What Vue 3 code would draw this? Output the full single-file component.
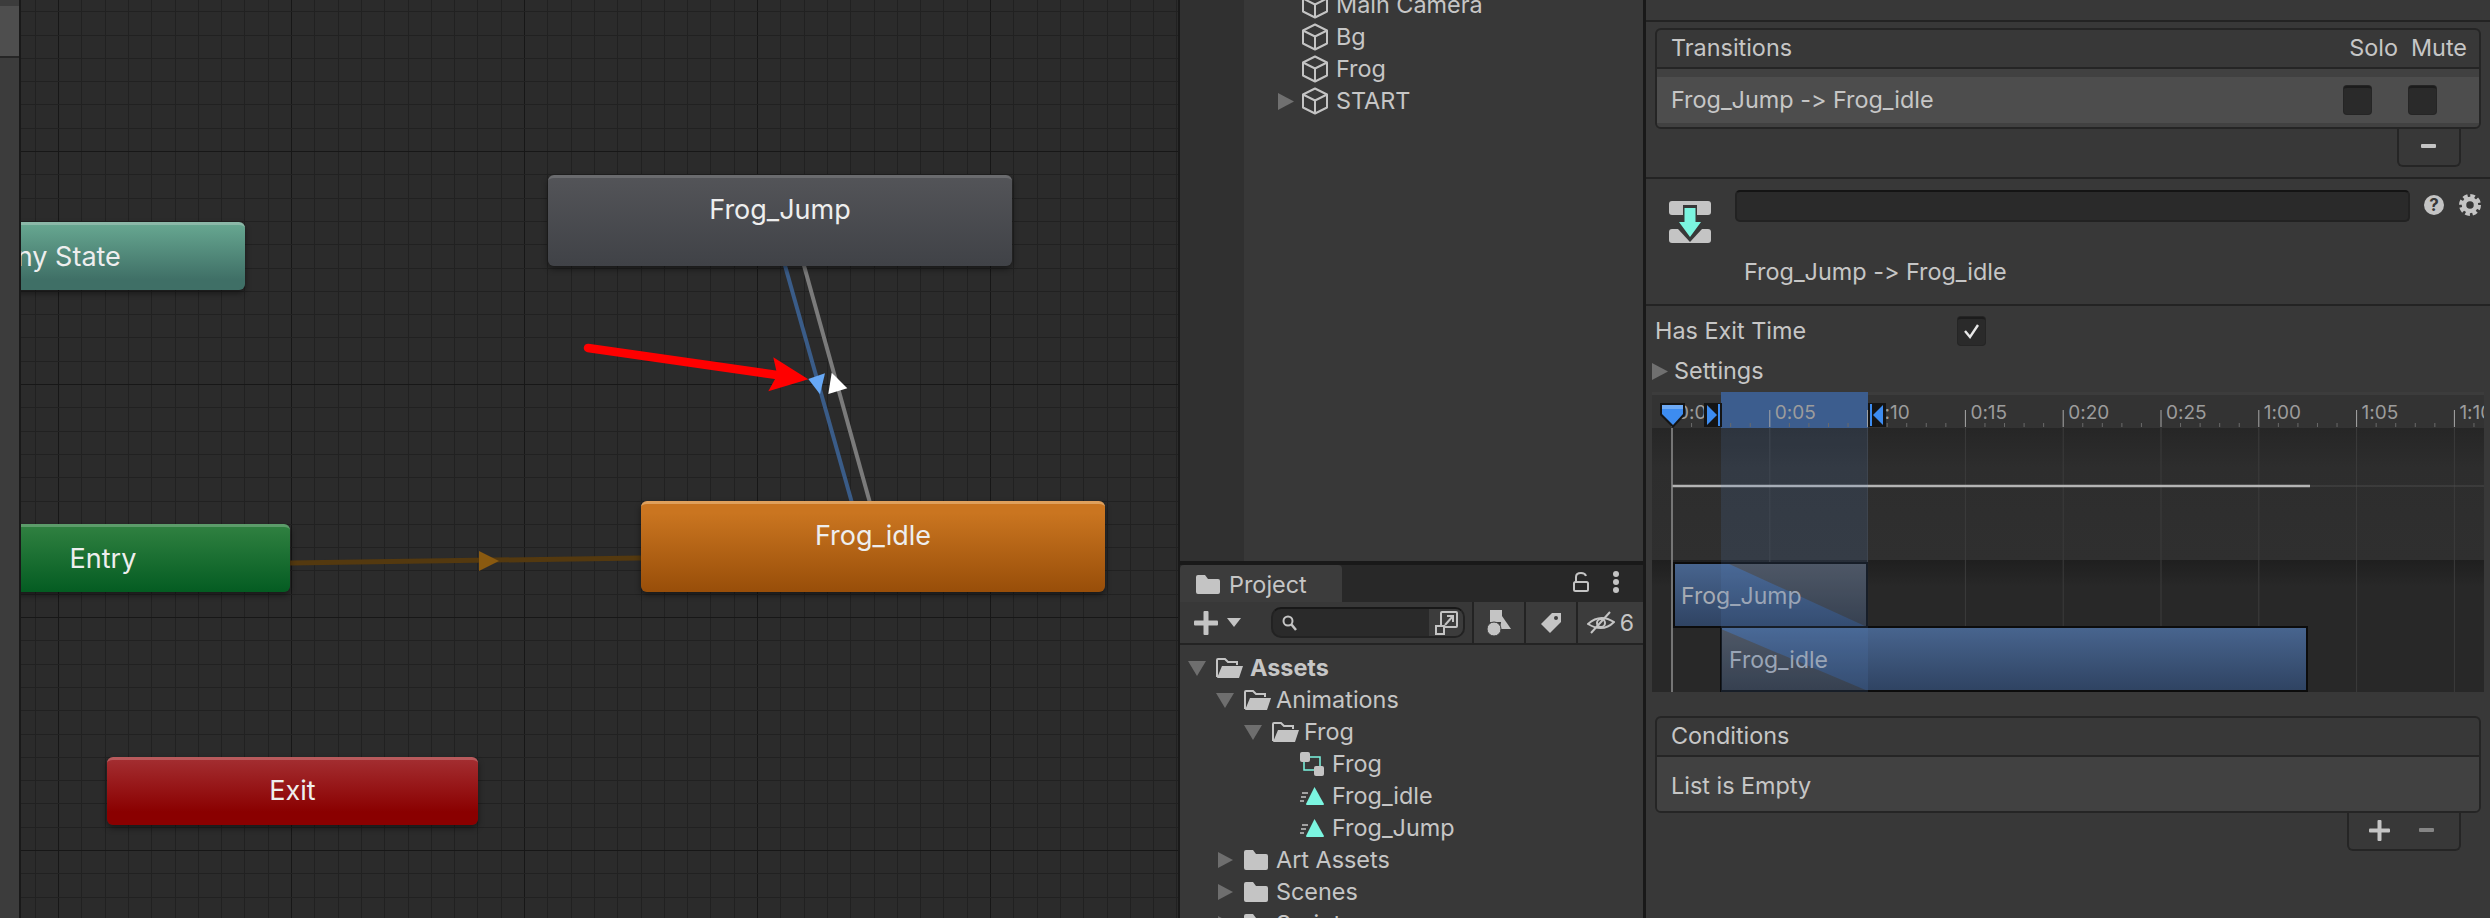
<script setup>
const hierarchyRows = [
  { name: 'Main Camera' },
  { name: 'Bg' },
  { name: 'Frog' },
  { name: 'START', arrow: true }
]

const projectRows = [
  { name: 'Assets', depth: 0, arrow: 'down', icon: 'open', bold: true },
  { name: 'Animations', depth: 1, arrow: 'down', icon: 'open' },
  { name: 'Frog', depth: 2, arrow: 'down', icon: 'open' },
  { name: 'Frog', depth: 3, icon: 'controller' },
  { name: 'Frog_idle', depth: 3, icon: 'clip' },
  { name: 'Frog_Jump', depth: 3, icon: 'clip' },
  { name: 'Art Assets', depth: 1, arrow: 'right', icon: 'folder' },
  { name: 'Scenes', depth: 1, arrow: 'right', icon: 'folder' },
  { name: 'Scripts', depth: 1, arrow: 'right', icon: 'folder' }
]

const nodes = [
  { name: 'Any State', cls: 'any' },
  { name: 'Entry', cls: 'entry' },
  { name: 'Frog_Jump', cls: 'jump' },
  { name: 'Frog_idle', cls: 'idle' },
  { name: 'Exit', cls: 'exit' }
]

// graph grid: 23.3px cells, every tenth line is darker
const gridX = []
for (let i = -2; i < 50; i++) gridX.push({ pos: Math.round(58 + i * 23.3), major: i % 10 === 0 })
const gridY = []
for (let i = -6; i < 34; i++) gridY.push({ pos: Math.round(151 + i * 23.3), major: i % 10 === 0 })

// ruler: one major step is 97.8px, five minor ticks per step
const step = 97.8
const labels = ['0:00', '0:05', '0:10', '0:15', '0:20', '0:25', '1:00', '1:05', '1:10']
const majors = labels.map((text, i) => ({ text, x: 1672 + i * step }))
const minors = []
for (let i = 0; i < 45; i++) {
  if (i % 5 !== 0) minors.push(1672 + (i * step) / 5)
}
</script>

<template>
  <div class="screen">
    <div class="strip">
      <div class="strip-tab"></div>
    </div>

    <div class="graph">
      <svg class="graph-lines" viewBox="21 0 1157 918" width="1157" height="918">
        <g shape-rendering="crispEdges">
          <line v-for="g in gridX" :key="'x' + g.pos" :x1="g.pos + 0.5" y1="0" :x2="g.pos + 0.5" y2="918" :stroke="g.major ? '#171717' : '#212121'" />
          <line v-for="g in gridY" :key="'y' + g.pos" x1="21" :y1="g.pos + 0.5" x2="1178" :y2="g.pos + 0.5" :stroke="g.major ? '#171717' : '#212121'" />
        </g>
        <line x1="784" y1="262" x2="852" y2="503" stroke="#3a5c88" stroke-width="4" />
        <line x1="803" y1="262" x2="870" y2="503" stroke="#7b7b7b" stroke-width="4" />
        <polygon points="808.3,379 825,373.3 820,394.3" fill="#67a8f5" />
        <polygon points="831.7,372.7 847.3,388.3 828.3,394" fill="#ffffff" />
        <line x1="290" y1="563" x2="641" y2="558" stroke="#54390f" stroke-width="5" />
        <polygon points="479,551 499,561 479,571" fill="#8a5a10" />
        <line x1="588" y1="348" x2="777" y2="375" stroke="#ff0000" stroke-width="8.5" stroke-linecap="round" />
        <polygon points="773.3,357.3 808.3,379.3 768.3,391.3 777.3,375" fill="#ff0000" />
      </svg>
      <div v-for="node in nodes" :key="node.name" class="node" :class="node.cls">{{ node.name }}</div>
    </div>

    <div class="middle">
      <div class="hierarchy">
        <div class="hierarchy-list">
          <div v-for="row in hierarchyRows" :key="row.name" class="h-row">
            <span class="h-arrow">
              <svg v-if="row.arrow" width="16" height="17" viewBox="0 0 16 17"><polygon points="0,0 16,8.5 0,17" fill="#707070" /></svg>
            </span>
            <svg class="cube" width="26" height="28" viewBox="0 0 26 28" fill="none" stroke="#c4c4c4" stroke-width="2" stroke-linejoin="round">
              <path d="M13 1.5 L25 7.5 V20.5 L13 26.5 L1 20.5 V7.5 Z" />
              <path d="M1 7.5 L13 13.5 L25 7.5 M13 13.5 V26.5" />
            </svg>
            <span class="h-name">{{ row.name }}</span>
          </div>
        </div>
      </div>

      <div class="project">
        <div class="tabbar">
          <div class="tab">
            <svg width="24" height="19" viewBox="0 0 24 19"><path d="M0 2 Q0 0 2 0 H9 L12 4 H22 Q24 4 24 6 V17 Q24 19 22 19 H2 Q0 19 0 17 Z" fill="#c4c4c4" /></svg>
            <span>Project</span>
          </div>
          <div class="tab-actions">
            <svg width="16" height="20" viewBox="0 0 16 20" fill="none" stroke="#c4c4c4" stroke-width="2">
              <rect x="1" y="10" width="14" height="9" rx="1.5" />
              <path d="M3 10 V5 Q3 1 8 1 Q12 1 13 4" />
            </svg>
            <svg width="6" height="22" viewBox="0 0 6 22" fill="#c4c4c4">
              <circle cx="3" cy="3" r="3" /><circle cx="3" cy="11" r="3" /><circle cx="3" cy="19" r="3" />
            </svg>
          </div>
        </div>

        <div class="toolbar">
          <div class="add-btn">
            <svg width="24" height="24" viewBox="0 0 24 24" fill="#c4c4c4"><rect x="9.5" width="5" height="24" rx="1" /><rect y="9.5" width="24" height="5" rx="1" /></svg>
            <svg width="14" height="9" viewBox="0 0 14 9"><polygon points="0,0 14,0 7,9" fill="#c4c4c4" /></svg>
          </div>
          <div class="search">
            <svg class="search-icon" width="15" height="16" viewBox="0 0 15 16" fill="none" stroke="#c4c4c4" stroke-width="2">
              <circle cx="6" cy="6" r="4.5" /><line x1="9.5" y1="9.5" x2="14" y2="15" stroke-width="2.5" />
            </svg>
            <div class="search-btn">
              <svg width="23" height="24" viewBox="0 0 23 24" fill="none" stroke="#c4c4c4" stroke-width="2">
                <path d="M6 15 V2 Q6 1 7 1 H21 Q22 1 22 2 V15 Q22 16 21 16 H10" />
                <rect x="1" y="15" width="8" height="8" />
                <path d="M10 14 L18 5 M12 5 H18 V11" />
              </svg>
            </div>
          </div>
          <div class="tool-btn shapes">
            <svg width="24" height="26" viewBox="0 0 24 26" fill="#c4c4c4">
              <rect x="3" y="0" width="12" height="12" />
              <polygon points="15,6 24,19 13,19" />
              <circle cx="7" cy="19" r="7" stroke="#3c3c3c" stroke-width="1" />
            </svg>
          </div>
          <div class="tool-btn tag">
            <svg width="20" height="20" viewBox="0 0 20 20"><path d="M11 0 H20 V9 L9 20 L0 11 Z" fill="#c4c4c4" /><circle cx="15" cy="5" r="2" fill="#3c3c3c" /></svg>
          </div>
          <div class="tool-btn eye">
            <svg width="28" height="24" viewBox="0 0 28 24" fill="none" stroke="#c4c4c4" stroke-width="2">
              <path d="M1 13 Q13 2 27 11 Q16 22 1 13 Z" /><circle cx="14" cy="12" r="4" /><line x1="4" y1="22" x2="23" y2="1" />
            </svg>
            <span>6</span>
          </div>
        </div>

        <div class="tree">
          <div v-for="(row, i) in projectRows" :key="i" class="p-row" :style="{ paddingLeft: 8 + row.depth * 28 + 'px' }">
            <span class="p-arrow">
              <svg v-if="row.arrow === 'down'" width="18" height="15" viewBox="0 0 18 15"><polygon points="0,0 18,0 9,15" fill="#6e6e6e" /></svg>
              <svg v-if="row.arrow === 'right'" class="arrow-right" width="15" height="16" viewBox="0 0 15 16"><polygon points="0,0 15,8 0,16" fill="#6e6e6e" /></svg>
            </span>
            <span class="p-icon">
              <svg v-if="row.icon === 'open'" width="27" height="20" viewBox="0 0 27 20">
                <path d="M1 19 V2 Q1 1 2 1 H9 L12 4 H21 V7" fill="none" stroke="#c4c4c4" stroke-width="2" />
                <path d="M6 8 H27 L23 20 H1 Z" fill="#c4c4c4" />
              </svg>
              <svg v-if="row.icon === 'folder'" width="24" height="20" viewBox="0 0 24 20">
                <path d="M0 2 Q0 0 2 0 H9 L12 4 H22 Q24 4 24 6 V18 Q24 20 22 20 H2 Q0 20 0 18 Z" fill="#c4c4c4" />
              </svg>
              <svg v-if="row.icon === 'controller'" width="24" height="24" viewBox="0 0 24 24">
                <path d="M10 5 H20 V14 M4 10 V18 H14" fill="none" stroke="#7bf5e0" stroke-width="1.5" />
                <rect width="10" height="10" rx="2" fill="#c4c4c4" />
                <rect x="14" y="14" width="10" height="10" rx="2" fill="#c4c4c4" />
              </svg>
              <svg v-if="row.icon === 'clip'" width="24" height="18" viewBox="0 0 24 18">
                <path d="M14.5 0 L24 17 Q24 18 23 18 H7 Q6 18 6 17 Z" fill="#7bf5e0" />
                <path d="M2 6 H8 M1 10 H6 M0 14 H4" stroke="#c4c4c4" stroke-width="1.5" />
              </svg>
            </span>
            <span class="p-name" :class="{ bold: row.bold }">{{ row.name }}</span>
          </div>
        </div>
      </div>
    </div>

    <div class="inspector">
      <div class="top-gap"></div>

      <div class="transitions-section">
        <div class="list-box">
          <div class="list-head">
            <span>Transitions</span>
            <span class="head-right"><span>Solo</span><span>Mute</span></span>
          </div>
          <div class="list-body">
            <div class="list-row">
              <span class="row-name">Frog_Jump -&gt; Frog_idle</span>
              <span class="checks"><span class="check"></span><span class="check"></span></span>
            </div>
          </div>
        </div>
        <div class="list-foot narrow">
          <span class="minus"></span>
        </div>
      </div>

      <div class="title-section">
        <div class="title-row">
          <svg class="transition-icon" width="42" height="42" viewBox="0 0 42 42">
            <rect width="42" height="14" rx="3" fill="#c4c4c4" />
            <rect y="28" width="42" height="14" rx="3" fill="#c4c4c4" />
            <rect x="14" y="4" width="14" height="10" fill="#383838" />
            <path d="M9 28 H33 L21 41 Z" fill="#383838" />
            <path d="M15.5 7 H26.5 V21 H32 L21 36 L10 21 H15.5 Z" fill="#7bf5e0" />
          </svg>
          <div class="name-input"></div>
          <svg class="help" width="20" height="20" viewBox="0 0 20 20">
            <circle cx="10" cy="10" r="10" fill="#c4c4c4" />
            <text x="10" y="16" text-anchor="middle" class="help-text">?</text>
          </svg>
          <svg class="gear" width="22" height="22" viewBox="0 0 22 22" fill="none" stroke="#c4c4c4">
            <circle cx="11" cy="11" r="6" stroke-width="4.5" />
            <circle cx="11" cy="11" r="9" stroke-width="4" stroke-dasharray="4.5 2.57" />
          </svg>
        </div>
        <div class="subtitle">Frog_Jump -&gt; Frog_idle</div>
      </div>

      <div class="settings-section">
        <div class="exit-row">
          <span class="exit-label">Has Exit Time</span>
          <span class="check">
            <svg width="27" height="28" viewBox="0 0 27 28"><path d="M7 14 L12 20 L20 8" fill="none" stroke="#e8e8e8" stroke-width="2.4" /></svg>
          </span>
        </div>
        <div class="settings-row">
          <svg width="16" height="17" viewBox="0 0 16 17"><polygon points="0,0 16,8.5 0,17" fill="#707070" /></svg>
          <span class="settings-name">Settings</span>
        </div>

        <svg class="timeline" width="832" height="300" viewBox="1652 392 832 300">
          <defs>
            <linearGradient id="curve-bg" x1="0" y1="0" x2="0" y2="1">
              <stop offset="0" stop-color="#262626" />
              <stop offset="0.3" stop-color="#2d2d2d" />
              <stop offset="1" stop-color="#2f2f2f" />
            </linearGradient>
            <linearGradient id="lane-bg" x1="0" y1="0" x2="0" y2="1">
              <stop offset="0" stop-color="#1f1f1f" />
              <stop offset="0.2" stop-color="#282828" />
              <stop offset="1" stop-color="#282828" />
            </linearGradient>
            <linearGradient id="clip-blue" x1="0" y1="0" x2="0" y2="1">
              <stop offset="0" stop-color="#48658f" />
              <stop offset="1" stop-color="#2f4362" />
            </linearGradient>
            <linearGradient id="clip-gray" x1="0" y1="0" x2="0" y2="1">
              <stop offset="0" stop-color="#4d5056" />
              <stop offset="1" stop-color="#31353c" />
            </linearGradient>
          </defs>

          <rect x="1652" y="392" width="832" height="36" fill="#333333" />
          <rect x="1652" y="392" width="832" height="3" fill="#3c3c3c" />
          <rect x="1652" y="428" width="832" height="132" fill="url(#curve-bg)" />
          <rect x="1652" y="560" width="832" height="132" fill="url(#lane-bg)" />
          <rect x="1721" y="392" width="147" height="36" fill="#3c5d8e" />

          <line v-for="x in minors" :key="x" :x1="x" y1="423" :x2="x" y2="427" stroke="#6a6a6a" />
          <g v-for="m in majors" :key="m.x">
            <line :x1="m.x" y1="410" :x2="m.x" y2="427" stroke="#a8a8a8" />
            <line :x1="m.x" y1="428" :x2="m.x" y2="692" stroke="#3c3c3c" />
            <text :x="m.x + 5" y="419" class="tick-label">{{ m.text }}</text>
          </g>

          <line x1="1672" y1="486" x2="2484" y2="486" stroke="#4a4a4a" stroke-width="1" />
          <line x1="1672" y1="486" x2="2310" y2="486" stroke="#b4b4b4" stroke-width="2.5" />

          <g>
            <rect x="1674" y="563" width="193" height="64" fill="url(#clip-gray)" />
            <polygon points="1674,563 1727,563 1867,627 1674,627" fill="url(#clip-blue)" />
            <rect x="1674" y="563" width="193" height="64" fill="none" stroke="#0c0c0c" stroke-width="2" />
            <text x="1681" y="604" class="clip-label">Frog_Jump</text>
          </g>
          <g>
            <rect x="1721" y="627" width="586" height="64" fill="url(#clip-blue)" />
            <polygon points="1721,629 1868,691 1721,691" fill="url(#clip-gray)" />
            <rect x="1721" y="627" width="586" height="64" fill="none" stroke="#0c0c0c" stroke-width="2" />
            <text x="1729" y="668" class="clip-label">Frog_idle</text>
          </g>

          <rect x="1721" y="428" width="147" height="264" fill="#5a88cc" opacity="0.15" />
          <line x1="1672" y1="428" x2="1672" y2="692" stroke="#8c8c8c" stroke-width="1.5" />

          <polygon points="1660,403 1685,403 1685,415 1673,428 1660,415" fill="#141414" />
          <polygon points="1662,405 1683,405 1683,414 1673,425 1662,414" fill="#3d8cf0" />
          <rect x="1662" y="405" width="21" height="4" fill="#6eaaf5" />

          <rect x="1704" y="403" width="18" height="24" fill="#141414" />
          <polygon points="1707,405 1717,415 1707,425" fill="#3d8cf0" />
          <rect x="1718" y="404" width="2" height="22" fill="#3d8cf0" />
          <rect x="1868" y="403" width="18" height="24" fill="#141414" />
          <polygon points="1883,405 1873,415 1883,425" fill="#3d8cf0" />
          <rect x="1870" y="404" width="2" height="22" fill="#3d8cf0" />
        </svg>
      </div>

      <div class="conditions-section">
        <div class="list-box conditions">
          <div class="list-head"><span>Conditions</span></div>
          <div class="empty-body">List is Empty</div>
        </div>
        <div class="list-foot wide">
          <svg width="21" height="21" viewBox="0 0 21 21" fill="#c4c4c4"><rect x="8.5" width="4" height="21" rx="1" /><rect y="8.5" width="21" height="4" rx="1" /></svg>
          <span class="minus off"></span>
        </div>
      </div>
    </div>
  </div>
</template>

<style>
html, body {
  margin: 0;
  background: #191919;
}
</style>

<style scoped>
.screen {
  display: flex;
  width: 2490px;
  height: 918px;
  overflow: hidden;
  background: #191919;
  font-family: Inter, "Noto Sans", sans-serif;
  font-size: 23.4px;
  font-variant-ligatures: none;
  font-feature-settings: "calt" 0, "liga" 0;
  color: #c6c6c6;
}

.h-name,
.p-name,
.row-name,
.exit-label,
.settings-name,
.empty-body {
  padding-bottom: 2px;
}

.strip {
  flex: none;
  width: 19px;
  margin-right: 2px;
  padding-top: 6px;
  background: #3c3c3c;
  box-sizing: border-box;
}

.strip-tab {
  height: 50px;
  background: #4e4e4e;
  border-bottom: 2px solid #262626;
}

.graph {
  position: relative;
  flex: none;
  width: 1157px;
  height: 918px;
  overflow: hidden;
  background: #2b2b2b;
}

.graph-lines {
  position: absolute;
  left: 0;
  top: 0;
}

.node {
  position: absolute;
  display: flex;
  justify-content: center;
  box-sizing: border-box;
  width: 464px;
  height: 91px;
  padding-top: 12px;
  border-radius: 6px;
  font-size: 27px;
  line-height: 40px;
  color: #eeeeee;
  box-shadow: 0 3px 6px rgba(0, 0, 0, 0.45);
}

.any {
  left: -147px;
  top: 222px;
  width: 371px;
  height: 68px;
  padding-top: 12px;
  background: linear-gradient(#66a690, #3f6f66 85%);
  border-top: 3px solid #8bb8a8;
}

.entry {
  left: -102px;
  top: 524px;
  width: 371px;
  height: 68px;
  padding: 12px 3px 0 0;
  background: linear-gradient(#2f8040, #045c22);
  border-top: 3px solid #5c9c6a;
}

.jump {
  left: 527px;
  top: 175px;
  background: linear-gradient(#535458, #404247);
  border-top: 3px solid #6a6b6e;
}

.idle {
  left: 620px;
  top: 501px;
  background: linear-gradient(#ca7520 10%, #984e09);
  border-top: 3px solid #dfa05c;
}

.exit {
  left: 86px;
  top: 757px;
  width: 371px;
  height: 68px;
  padding-top: 11px;
  background: linear-gradient(#a32d30, #8a0000 80%);
  border-top: 3px solid #b95a5c;
}

.middle {
  flex: none;
  display: flex;
  flex-direction: column;
  width: 463px;
  margin-left: 2px;
}

.hierarchy {
  flex: none;
  height: 561px;
  overflow: hidden;
  background: linear-gradient(90deg, #303030 64px, #383838 64px);
}

.hierarchy-list {
  margin-top: -11px;
  padding-left: 98px;
}

.h-row {
  display: flex;
  align-items: center;
  height: 32px;
}

.h-arrow {
  display: flex;
  width: 24px;
}

.cube {
  flex: none;
  margin-right: 8px;
}

.project {
  flex: 1;
  margin-top: 4px;
  background: #383838;
  overflow: hidden;
}

.tabbar {
  display: flex;
  justify-content: space-between;
  align-items: center;
  height: 37px;
  background: #282828;
}

.tab {
  display: flex;
  align-items: center;
  gap: 9px;
  box-sizing: border-box;
  width: 162px;
  height: 37px;
  padding: 2px 0 0 16px;
  border-radius: 4px 4px 0 0;
  background: #3c3c3c;
}

.tab-actions {
  display: flex;
  align-items: center;
  gap: 24px;
  padding: 0 24px 3px 0;
}

.toolbar {
  display: flex;
  align-items: center;
  height: 41px;
  border-bottom: 2px solid #232323;
  background: #383838;
}

.add-btn {
  display: flex;
  align-items: center;
  gap: 9px;
  width: 91px;
  padding-left: 14px;
  box-sizing: border-box;
}

.search {
  position: relative;
  display: flex;
  justify-content: space-between;
  align-items: center;
  box-sizing: border-box;
  width: 194px;
  height: 31px;
  margin-right: 7px;
  padding-left: 9px;
  border: 2px solid #222222;
  border-top-color: #181818;
  border-radius: 10px;
  background: #2a2a2a;
  overflow: hidden;
}

.search-btn {
  display: flex;
  justify-content: center;
  align-items: center;
  width: 34px;
  height: 100%;
  background: #3c3c3c;
}

.tool-btn {
  display: flex;
  justify-content: center;
  align-items: center;
  box-sizing: border-box;
  height: 41px;
  border-left: 2px solid #232323;
  background: #3c3c3c;
}

.shapes,
.tag {
  width: 52px;
}

.eye {
  flex: 1;
  gap: 5px;
  font-size: 23px;
}

.tree {
  padding-top: 7px;
}

.p-row {
  display: flex;
  align-items: center;
  height: 32px;
}

.p-arrow {
  display: flex;
  flex: none;
  width: 28px;
}

.arrow-right {
  margin-left: 2px;
}

.p-icon {
  display: flex;
  flex: none;
  width: 32px;
}

.bold {
  margin-left: 2px;
  font-weight: 700;
}

.inspector {
  flex: none;
  width: 844px;
  margin-left: 3px;
  background: #383838;
}

.top-gap {
  height: 20px;
  border-bottom: 2px solid #232323;
}

.transitions-section {
  display: flex;
  flex-direction: column;
  box-sizing: border-box;
  height: 157px;
  padding: 6px 9px 0;
  border-bottom: 2px solid #232323;
}

.list-box {
  box-sizing: border-box;
  height: 101px;
  border: 2px solid #252525;
  border-radius: 6px;
  overflow: hidden;
}

.list-head {
  display: flex;
  justify-content: space-between;
  align-items: center;
  box-sizing: border-box;
  height: 39px;
  padding: 0 12px 2px 14px;
  border-bottom: 2px solid #252525;
}

.head-right {
  display: flex;
  gap: 13px;
}

.list-body {
  height: 58px;
  padding-top: 8px;
  background: #414141;
  box-sizing: border-box;
}

.list-row {
  display: flex;
  justify-content: space-between;
  align-items: center;
  height: 46px;
  padding: 0 43px 0 14px;
  background: #4d4d4d;
}

.checks {
  display: flex;
  gap: 38px;
}

.check {
  display: block;
  flex: none;
  box-sizing: border-box;
  width: 27px;
  height: 28px;
  border-radius: 3px;
  background: #2a2a2a;
  border-top: 2px solid #1c1c1c;
  box-shadow: 0 0 0 1px #252525;
}

.check svg {
  display: block;
  margin-top: -2px;
}

.list-foot {
  display: flex;
  align-items: center;
  align-self: flex-end;
  flex: none;
  box-sizing: border-box;
  height: 40px;
  margin: -2px 20px 0 0;
  border: 2px solid #252525;
  border-top: 0;
  border-radius: 0 0 6px 6px;
}

.narrow {
  width: 64px;
  padding-left: 22px;
}

.wide {
  width: 114px;
  padding-left: 20px;
  gap: 29px;
}

.minus {
  display: block;
  width: 15px;
  height: 4px;
  border-radius: 1px;
  background: #c4c4c4;
}

.minus.off {
  background: #858585;
}

.title-section {
  box-sizing: border-box;
  height: 127px;
  padding: 11px 0 0 23px;
  border-bottom: 2px solid #232323;
}

.title-row {
  display: flex;
  align-items: flex-start;
}

.transition-icon {
  flex: none;
  margin-top: 11px;
}

.name-input {
  box-sizing: border-box;
  width: 675px;
  height: 32px;
  margin-left: 24px;
  border: 2px solid #222222;
  border-top-color: #141414;
  border-radius: 5px;
  background: #2a2a2a;
}

.help {
  flex: none;
  margin: 5px 0 0 14px;
}

.help-text {
  font-family: Inter, sans-serif;
  font-size: 17px;
  font-weight: 700;
  fill: #383838;
}

.gear {
  flex: none;
  margin: 4px 0 0 15px;
}

.subtitle {
  margin: 14px 0 0 75px;
  line-height: 30px;
}

.settings-section {
  padding: 11px 0 0 6px;
}

.exit-row {
  display: flex;
  align-items: center;
  height: 28px;
  padding-left: 3px;
}

.exit-label {
  width: 303px;
}

.settings-row {
  display: flex;
  align-items: center;
  gap: 6px;
  height: 26px;
  margin-top: 13px;
}

.timeline {
  display: block;
  margin-top: 8px;
}

.tick-label {
  font-family: Inter, sans-serif;
  font-size: 19px;
  fill: #9c9c9c;
}

.clip-label {
  font-family: Inter, sans-serif;
  font-size: 23px;
  fill: #a6abb3;
}

.conditions-section {
  display: flex;
  flex-direction: column;
  padding: 24px 9px 0;
}

.conditions {
  height: 97px;
}

.empty-body {
  display: flex;
  align-items: center;
  box-sizing: border-box;
  height: 58px;
  padding-left: 14px;
  background: #414141;
}
</style>
